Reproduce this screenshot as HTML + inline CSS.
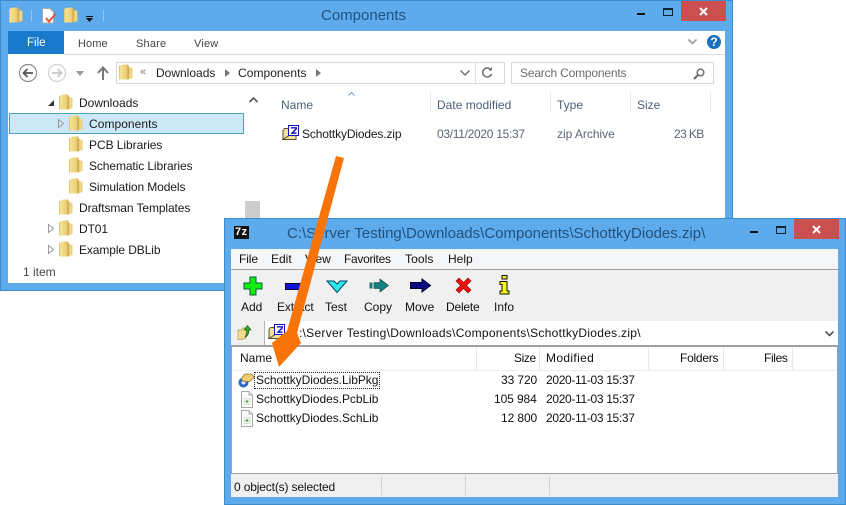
<!DOCTYPE html>
<html><head><meta charset="utf-8"><style>
html,body{margin:0;padding:0;background:#fff}
body{width:846px;height:505px;position:relative;overflow:hidden;font-family:"Liberation Sans",sans-serif;font-size:12px;color:#1e2a3a}
.a{position:absolute}
.t{position:absolute;white-space:nowrap;line-height:15px}
.g{color:#5a6472}
svg{position:absolute;overflow:visible}
</style></head><body>
<svg width="0" height="0" style="position:absolute"><defs>
<linearGradient id="fg" x1="0" x2="1" y1="0" y2="0"><stop offset="0" stop-color="#f6e7a4"/><stop offset=".55" stop-color="#eccf74"/><stop offset=".7" stop-color="#c9a449"/><stop offset=".8" stop-color="#f2dc90"/><stop offset="1" stop-color="#e9cd78"/></linearGradient>
<symbol id="f" viewBox="0 0 14 16"><path d="M0 2L4 .5H9L10 3L13.500 4V14L9 15.500H0Z" fill="url(#fg)"/><path d="M0 2V15.500H1V2Z" fill="#e2c570"/></symbol>
<symbol id="doc" viewBox="0 0 14 17"><path d="M1.500.5H9L12.500 4V16.500H1.500Z" fill="#fbfbfb" stroke="#a8a8a8"/><path d="M9 .5V4H12.500" fill="#e8e8e8" stroke="#a8a8a8"/><rect x="4" y="7.500" width="6" height="6" fill="#eef5e8" stroke="#c8d4c0" stroke-width=".6"/><path d="M5.500 10.500H8.500M7 9V12" stroke="#3aa53a"/></symbol>
<symbol id="zip" viewBox="0 0 17 16"><path d="M1 5.500L2.500 3.500H8V14.500H1Z" fill="#f2e29a" stroke="#56502a"/><path d="M1 14.500H14V10H8Z" fill="#f2e29a" stroke="#56502a"/><rect x="6.500" y=".5" width="10" height="10" fill="#fff" stroke="#1010c0"/><path d="M9 2.800H14.200V4L10 8.200H14.500" fill="none" stroke="#1010c0" stroke-width="1.400"/></symbol>
</defs></svg>

<!-- Explorer window -->
<div class="a" style="left:0;top:0;width:733px;height:291px;background:#5dabec;box-shadow:inset 0 0 0 1px #3f8ccb"></div>
<svg style="left:9px;top:7px" width="14" height="16"><use href="#f" width="14" height="16"/></svg>
<div class="a" style="left:31px;top:10px;width:1px;height:11px;background:#9cc6ea"></div>
<svg style="left:42px;top:8px" width="15" height="16"><path d="M.5.5H8L11.500 4V15H.5Z" fill="#fff" stroke="#aaa"/><path d="M4 10L7 13.500L13.500 6" fill="none" stroke="#e0562a" stroke-width="2"/></svg>
<svg style="left:64px;top:7px" width="14" height="16"><use href="#f" width="14" height="16"/></svg>
<div class="a" style="left:86px;top:16px;width:7px;height:1px;background:#111"></div>
<svg style="left:86px;top:18px" width="7" height="4"><path d="M0 0H7L3.500 4Z" fill="#111"/></svg>
<div class="a" style="left:103px;top:10px;width:1px;height:11px;background:#9cc6ea"></div>
<div class="t" style="left:321px;top:8px;font-size:15px;line-height:16px;color:#24527c">Components</div>
<div class="a" style="left:637px;top:13px;width:8px;height:2px;background:#111"></div>
<div class="a" style="left:663px;top:8px;width:8px;height:5px;border:1px solid #123;border-top-width:2px"></div>
<div class="a" style="left:681px;top:1px;width:45px;height:20px;background:#c9504f"></div>
<svg style="left:699px;top:7px" width="9" height="9"><path d="M1 1L8 8M8 1L1 8" stroke="#fff" stroke-width="2"/></svg>

<div class="a" style="left:8px;top:31px;width:717px;height:252px;background:#fff"></div>
<div class="a" style="left:8px;top:31px;width:56px;height:23px;background:#1979ca"></div>
<div class="t" style="left:27px;top:36px;color:#fff;font-size:11.500px;">File</div>
<div class="t g" style="left:78px;top:37px;font-size:11px;letter-spacing:.1px;color:#444">Home</div>
<div class="t g" style="left:136px;top:37px;font-size:11px;letter-spacing:.2px;color:#444">Share</div>
<div class="t g" style="left:194px;top:37px;font-size:11px;letter-spacing:.2px;color:#444">View</div>
<div class="a" style="left:64px;top:54px;width:661px;height:1px;background:#dadbdc"></div>
<svg style="left:688px;top:39px" width="9" height="6"><path d="M.5 .5L4.500 4.500L8.500 .5" fill="none" stroke="#9a9a9a" stroke-width="1.600"/></svg>
<div class="a" style="left:707px;top:35px;width:14px;height:14px;border-radius:50%;background:#1a70c0;color:#fff;font:bold 12px/14px 'Liberation Sans',sans-serif;text-align:center">?</div>
<!-- nav -->
<svg style="left:18px;top:63px" width="20" height="20"><circle cx="10" cy="10" r="8.500" fill="#fff" stroke="#8a8a8a" stroke-width="1.200"/><path d="M15 10H6M9.500 6L5.500 10L9.500 14" fill="none" stroke="#555" stroke-width="1.800"/></svg>
<svg style="left:47px;top:63px" width="20" height="20"><circle cx="10" cy="10" r="8.500" fill="#fff" stroke="#d0d0d0" stroke-width="1.200"/><path d="M5 10H14M10.500 6L14.500 10L10.500 14" fill="none" stroke="#c8c8c8" stroke-width="1.800"/></svg>
<svg style="left:76px;top:71px" width="8" height="5"><path d="M0 0H8L4 5Z" fill="#999"/></svg>
<svg style="left:97px;top:66px" width="12" height="14"><path d="M6 14V2M1 7L6 1.500L11 7" fill="none" stroke="#777" stroke-width="2"/></svg>
<div class="a" style="left:116px;top:62px;width:387px;height:20px;border:1px solid #d9d9d9;box-sizing:content-box"></div>
<svg style="left:119px;top:64px" width="14" height="16"><use href="#f" width="14" height="16"/></svg>
<div class="t" style="left:140px;top:65px;color:#777;font-size:11px">«</div>
<div class="t" style="left:156px;top:66px;color:#222;font-size:12px;letter-spacing:0">Downloads</div>
<svg style="left:225px;top:69px" width="5" height="8"><path d="M0 0L5 4L0 8Z" fill="#777"/></svg>
<div class="t" style="left:238px;top:66px;color:#222;font-size:12px;letter-spacing:.05px">Components</div>
<svg style="left:316px;top:69px" width="5" height="8"><path d="M0 0L5 4L0 8Z" fill="#777"/></svg>
<svg style="left:460px;top:70px" width="10" height="6"><path d="M.5 .5L5 5L9.500 .5" fill="none" stroke="#666" stroke-width="1.300"/></svg>
<div class="a" style="left:475px;top:63px;width:1px;height:20px;background:#ddd"></div>
<svg style="left:481px;top:66px" width="12" height="13"><path d="M10 4A4.500 4.500 0 1 0 10.500 8" fill="none" stroke="#666" stroke-width="1.400"/><path d="M7.500 4.500H11V1Z" fill="#666"/></svg>
<div class="a" style="left:511px;top:62px;width:201px;height:20px;border:1px solid #d9d9d9"></div>
<div class="t" style="left:520px;top:66px;color:#6d6d6d;letter-spacing:-.18px">Search Components</div>
<svg style="left:693px;top:68px" width="12" height="12"><circle cx="7.500" cy="4.500" r="3.300" fill="none" stroke="#777" stroke-width="1.600"/><path d="M5 7L1 11" stroke="#666" stroke-width="2"/></svg>
<!-- tree -->
<svg style="left:48px;top:100px" width="6" height="6"><path d="M6 0V6H0Z" fill="#333"/></svg>
<svg style="left:59px;top:94px" width="14" height="16"><use href="#f" width="14" height="16"/></svg>
<div class="t" style="left:79px;top:96px;letter-spacing:0;color:#1a1a1a">Downloads</div>
<div class="a" style="left:9px;top:113px;width:233px;height:19px;background:#cce8f7;border:1px solid #4da2bd"></div>
<svg style="left:58px;top:119px" width="6" height="9"><path d="M.5 .5L5.500 4.500L.5 8.500Z" fill="none" stroke="#999"/></svg>
<svg style="left:69px;top:115px" width="14" height="16"><use href="#f" width="14" height="16"/></svg>
<div class="t" style="left:89px;top:117px;letter-spacing:.05px;color:#1a1a1a">Components</div>
<svg style="left:69px;top:136px" width="14" height="16"><use href="#f" width="14" height="16"/></svg>
<div class="t" style="left:89px;top:138px;letter-spacing:-.05px;color:#1a1a1a">PCB Libraries</div>
<svg style="left:69px;top:157px" width="14" height="16"><use href="#f" width="14" height="16"/></svg>
<div class="t" style="left:89px;top:159px;letter-spacing:-.1px;color:#1a1a1a">Schematic Libraries</div>
<svg style="left:69px;top:178px" width="14" height="16"><use href="#f" width="14" height="16"/></svg>
<div class="t" style="left:89px;top:180px;letter-spacing:-.1px;color:#1a1a1a">Simulation Models</div>
<svg style="left:59px;top:199px" width="14" height="16"><use href="#f" width="14" height="16"/></svg>
<div class="t" style="left:79px;top:201px;letter-spacing:-.1px;color:#1a1a1a">Draftsman Templates</div>
<svg style="left:48px;top:224px" width="6" height="9"><path d="M.5 .5L5.500 4.500L.5 8.500Z" fill="none" stroke="#999"/></svg>
<svg style="left:59px;top:220px" width="14" height="16"><use href="#f" width="14" height="16"/></svg>
<div class="t" style="left:79px;top:222px;color:#1a1a1a;letter-spacing:-.1px">DT01</div>
<svg style="left:48px;top:245px" width="6" height="9"><path d="M.5 .5L5.500 4.500L.5 8.500Z" fill="none" stroke="#999"/></svg>
<svg style="left:59px;top:241px" width="14" height="16"><use href="#f" width="14" height="16"/></svg>
<div class="t" style="left:79px;top:243px;color:#1a1a1a;letter-spacing:-.1px">Example DBLib</div>
<div class="t g" style="left:23px;top:265px;color:#444">1 item</div>
<!-- scrollbar -->
<div class="a" style="left:245px;top:92px;width:16px;height:170px;background:#fff"></div>
<svg style="left:249px;top:97px" width="9" height="6"><path d="M.5 5L4.500 1L8.500 5" fill="none" stroke="#555" stroke-width="1.600"/></svg>
<div class="a" style="left:245px;top:201px;width:15px;height:19px;background:#cdcdcd"></div>
<!-- file list -->
<div class="t g" style="left:281px;top:98px;color:#4c607a">Name</div>
<svg style="left:348px;top:92px" width="7" height="4"><path d="M.5 3.500L3.500 .5L6.500 3.500" fill="none" stroke="#7a9ab5"/></svg>
<div class="a" style="left:430px;top:92px;width:1px;height:20px;background:#e5e5e5"></div>
<div class="t g" style="left:437px;top:98px;color:#4c607a;letter-spacing:.02px">Date modified</div>
<div class="a" style="left:550px;top:92px;width:1px;height:20px;background:#e5e5e5"></div>
<div class="t g" style="left:557px;top:98px;color:#4c607a">Type</div>
<div class="a" style="left:630px;top:92px;width:1px;height:20px;background:#e5e5e5"></div>
<div class="t g" style="left:637px;top:98px;color:#4c607a">Size</div>
<div class="a" style="left:710px;top:92px;width:1px;height:20px;background:#e5e5e5"></div>
<svg style="left:282px;top:125px" width="17" height="16"><use href="#zip" width="17" height="16"/></svg>
<div class="t" style="left:302px;top:127px;color:#1a1a1a;letter-spacing:-.15px">SchottkyDiodes.zip</div>
<div class="t g" style="left:437px;top:127px;letter-spacing:-.3px">03/11/2020 15:37</div>
<div class="t g" style="left:557px;top:127px;letter-spacing:-.02px">zip Archive</div>
<div class="t g" style="left:674px;top:127px;letter-spacing:-.6px">23 KB</div>

<!-- 7-zip window -->
<div class="a" style="left:224px;top:218px;width:622px;height:287px;background:#5dabec;box-shadow:inset 0 0 0 1px #3f8ccb"></div>
<div class="a" style="left:234px;top:226px;width:15px;height:13px;background:#111"></div>
<div class="t" style="left:235px;top:226px;color:#fff;font:bold 11px/13px 'Liberation Sans',sans-serif;letter-spacing:.5px">7z</div>
<div class="t" style="left:287px;top:225px;font-size:15px;line-height:18px;color:#24527c">C:\Server Testing\Downloads\Components\SchottkyDiodes.zip\</div>
<div class="a" style="left:750px;top:231px;width:8px;height:2px;background:#111"></div>
<div class="a" style="left:776px;top:226px;width:8px;height:5px;border:1px solid #123;border-top-width:2px"></div>
<div class="a" style="left:794px;top:219px;width:45px;height:20px;background:#c9504f"></div>
<svg style="left:812px;top:225px" width="9" height="9"><path d="M1 1L8 8M8 1L1 8" stroke="#fff" stroke-width="2"/></svg>

<div class="a" style="left:231px;top:249px;width:607px;height:21px;background:#f5f6f7"></div>
<div class="a" style="left:231px;top:269px;width:607px;height:1px;background:#a0a0a0"></div>
<div class="a" style="left:231px;top:270px;width:607px;height:51px;background:#f0f0f0"></div>
<div class="t" style="left:239px;top:252px;color:#111;letter-spacing:-.1px">File</div>
<div class="t" style="left:271px;top:252px;color:#111">Edit</div>
<div class="t" style="left:305px;top:252px;color:#111">View</div>
<div class="t" style="left:344px;top:252px;color:#111;letter-spacing:-.3px">Favorites</div>
<div class="t" style="left:405px;top:252px;color:#111;letter-spacing:.1px">Tools</div>
<div class="t" style="left:448px;top:252px;color:#111">Help</div>

<svg style="left:243px;top:276px" width="20" height="20"><path d="M7 1H13V7H19V13H13V19H7V13H1V7H7Z" fill="#12ee12" stroke="#063" stroke-width="1"/></svg>
<svg style="left:285px;top:283px" width="20" height="7"><rect x=".5" y=".5" width="19" height="6" fill="#1212e0" stroke="#003"/></svg>
<svg style="left:326px;top:280px" width="22" height="13"><path d="M1 1H8L11 4L14 1H21L11 12.500Z" fill="#2ee8e8" stroke="#046"/></svg>
<svg style="left:369px;top:278px" width="20" height="15"><rect x=".5" y="4.500" width="3" height="6" fill="#1a7a7a"/><path d="M5 4.500H11V1L19.500 7.500L11 14V10.500H5Z" fill="#1a7f7f" stroke="#044" stroke-width=".6"/></svg>
<svg style="left:410px;top:278px" width="21" height="15"><path d="M.5 4.500H12V1L20.500 7.500L12 14V10.500H.5Z" fill="#0b0b80" stroke="#003"/></svg>
<svg style="left:455px;top:277px" width="17" height="17"><path d="M1 4L4 1L8.500 5.500L13 1L16 4L11.500 8.500L16 13L13 16L8.500 11.500L4 16L1 13L5.500 8.500Z" fill="#ee1010" stroke="#800" stroke-width=".6"/></svg>
<svg style="left:499px;top:275px" width="11" height="20"><rect x="3" y=".5" width="5" height="3.500" fill="#f7f718" stroke="#111"/><path d="M1 6.500H8V16H10V19H1V16H3V9.500H1Z" fill="#f7f718" stroke="#111"/></svg>
<div class="t" style="left:241px;top:300px;color:#111">Add</div>
<div class="t" style="left:277px;top:300px;color:#111;letter-spacing:-.1px">Extract</div>
<div class="t" style="left:325px;top:300px;color:#111">Test</div>
<div class="t" style="left:364px;top:300px;color:#111">Copy</div>
<div class="t" style="left:405px;top:300px;color:#111">Move</div>
<div class="t" style="left:446px;top:300px;color:#111;letter-spacing:-.2px">Delete</div>
<div class="t" style="left:494px;top:300px;color:#111">Info</div>

<div class="a" style="left:231px;top:321px;width:33px;height:24px;background:#f0f0f0"></div>
<svg style="left:238px;top:324px" width="14" height="16"><path d="M0 6H3L5 4H8V14L3 15.500H0Z" fill="#f3dc92" stroke="#b59a4a" stroke-width=".7"/><path d="M7 13C9 10 9 8 8.500 6H6L9.500 1.500L13 6H11C11 9 10 12 7 13Z" fill="#2ca52c" stroke="#0a5a0a" stroke-width=".6"/></svg>
<div class="a" style="left:264px;top:321px;width:574px;height:24px;background:#fff;border-left:1px solid #b8b8b8;box-sizing:border-box"></div>
<svg style="left:268px;top:324px" width="17" height="16"><use href="#zip" width="17" height="16"/></svg>
<div class="t" style="left:290px;top:326px;color:#111;letter-spacing:.28px">C:\Server Testing\Downloads\Components\SchottkyDiodes.zip\</div>
<svg style="left:825px;top:331px" width="9" height="6"><path d="M.5 .5L4.500 4.500L8.500 .5" fill="none" stroke="#444" stroke-width="1.500"/></svg>

<div class="a" style="left:231px;top:345px;width:607px;height:2px;background:#a0a0a0"></div>
<div class="a" style="left:232px;top:347px;width:606px;height:126px;background:#fff"></div>
<div class="a" style="left:231px;top:347px;width:1px;height:126px;background:#a0a0a0"></div>
<div class="a" style="left:837px;top:347px;width:1px;height:126px;background:#a0a0a0"></div>
<div class="a" style="left:232px;top:370px;width:605px;height:1px;background:#eeeeee"></div>
<div class="t" style="left:240px;top:351px;color:#111">Name</div>
<div class="a" style="left:476px;top:348px;width:1px;height:22px;background:#e8e8e8"></div>
<div class="t" style="left:514px;top:351px;color:#111;letter-spacing:-.4px">Size</div>
<div class="a" style="left:539px;top:348px;width:1px;height:22px;background:#e8e8e8"></div>
<div class="t" style="left:546px;top:351px;color:#111;letter-spacing:.35px">Modified</div>
<div class="a" style="left:648px;top:348px;width:1px;height:22px;background:#e8e8e8"></div>
<div class="t" style="left:680px;top:351px;color:#111;letter-spacing:-.25px">Folders</div>
<div class="a" style="left:723px;top:348px;width:1px;height:22px;background:#e8e8e8"></div>
<div class="t" style="left:764px;top:351px;color:#111;letter-spacing:-.35px">Files</div>
<div class="a" style="left:792px;top:348px;width:1px;height:22px;background:#e8e8e8"></div>

<svg style="left:238px;top:372px" width="17" height="16"><circle cx="5.500" cy="10.500" r="5" fill="#2d66c0"/><circle cx="5.500" cy="10.500" r="2" fill="#dfe8f5"/><path d="M3 6.500L7 2H13.500L16.500 5L12 9.500H5.500Z" fill="#f0cc70" stroke="#8a7440" stroke-width=".7"/></svg>
<div class="a" style="left:254px;top:372px;width:126px;height:17px;border:1px dotted #222;box-sizing:border-box"></div>
<div class="t" style="left:256px;top:373px;color:#111;letter-spacing:-.05px">SchottkyDiodes.LibPkg</div>
<div class="t" style="left:501px;top:373px;color:#111;letter-spacing:-.1px">33 720</div>
<div class="t" style="left:546px;top:373px;color:#111;letter-spacing:-.33px">2020-11-03 15:37</div>
<svg style="left:240px;top:391px" width="14" height="17"><use href="#doc" width="14" height="17"/></svg>
<div class="t" style="left:256px;top:392px;color:#111;letter-spacing:-.05px">SchottkyDiodes.PcbLib</div>
<div class="t" style="left:494px;top:392px;color:#111;letter-spacing:-.1px">105 984</div>
<div class="t" style="left:546px;top:392px;color:#111;letter-spacing:-.33px">2020-11-03 15:37</div>
<svg style="left:240px;top:410px" width="14" height="17"><use href="#doc" width="14" height="17"/></svg>
<div class="t" style="left:256px;top:411px;color:#111;letter-spacing:-.05px">SchottkyDiodes.SchLib</div>
<div class="t" style="left:501px;top:411px;color:#111;letter-spacing:-.1px">12 800</div>
<div class="t" style="left:546px;top:411px;color:#111;letter-spacing:-.33px">2020-11-03 15:37</div>

<div class="a" style="left:231px;top:473px;width:607px;height:1px;background:#a0a0a0"></div>
<div class="a" style="left:231px;top:474px;width:607px;height:23px;background:#f0f0f0"></div>
<div class="t" style="left:234px;top:480px;color:#111;letter-spacing:-.15px">0 object(s) selected</div>
<div class="a" style="left:381px;top:476px;width:1px;height:19px;background:#d4d4d4"></div>
<div class="a" style="left:465px;top:476px;width:1px;height:19px;background:#d4d4d4"></div>
<div class="a" style="left:549px;top:476px;width:1px;height:19px;background:#d4d4d4"></div>

<!-- arrow -->
<svg style="left:0;top:0" width="846" height="505"><path d="M336 156L344 158L297 333L301 343L279 367L272 343L287 331Z" fill="#f87408"/></svg>
</body></html>
